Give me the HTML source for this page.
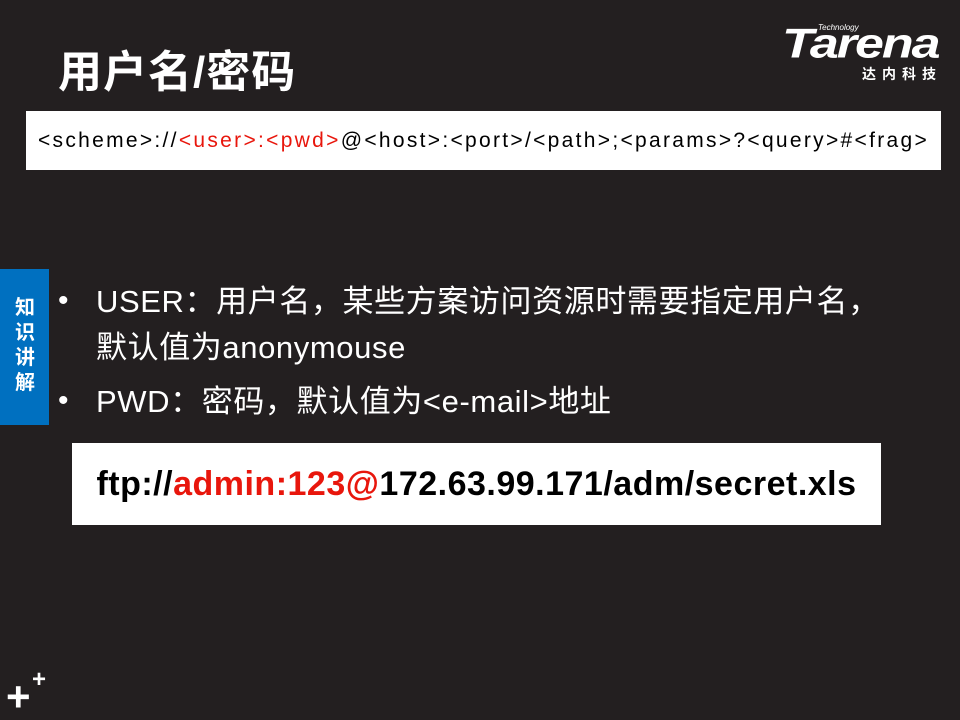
<!DOCTYPE html><html><head><meta charset="utf-8"><style>
body{margin:0;width:960px;height:720px;background:#231f20;position:relative;overflow:hidden;font-family:"Liberation Sans","Noto Sans CJK SC",sans-serif;color:#fff}
.a{position:absolute;white-space:nowrap}
.r{color:#e8160c}
</style></head><body>
<div class="a" style="left:58px;top:36px;font-size:44px;font-weight:bold;letter-spacing:1px">用户名/密码</div>
<div class="a" style="left:818px;top:23px;font-size:8px;font-style:italic">Technology</div>
<div class="a" style="left:782px;top:24px;font-size:52px;font-weight:bold;font-style:italic;letter-spacing:-2px;line-height:50px;transform:scaleY(0.8);transform-origin:top left">Tarena</div>
<div class="a" style="left:862px;top:64px;font-size:14px;font-weight:bold;letter-spacing:6px">达内科技</div>
<div class="a" style="left:26px;top:111px;width:915px;height:59px;background:#fff;color:#000;font-size:21px;line-height:59px;text-align:center;letter-spacing:2.3px">&lt;scheme&gt;://<span class="r">&lt;user&gt;:&lt;pwd&gt;</span>@&lt;host&gt;:&lt;port&gt;/&lt;path&gt;;&lt;params&gt;?&lt;query&gt;#&lt;frag&gt;</div>
<div class="a" style="left:0;top:269px;width:49px;height:156px;background:#0070c0"></div>
<div class="a" style="left:12px;top:296px;width:26px;font-size:20px;font-weight:bold;line-height:25px;text-align:center">知<br>识<br>讲<br>解</div>
<div class="a" style="left:58px;top:284px;font-size:30px">•</div>
<div class="a" style="left:96px;top:276px;font-size:31px;letter-spacing:0.6px">USER：用户名，某些方案访问资源时需要指定用户名，</div>
<div class="a" style="left:96px;top:322px;font-size:31px;letter-spacing:0.6px">默认值为anonymouse</div>
<div class="a" style="left:58px;top:384px;font-size:30px">•</div>
<div class="a" style="left:96px;top:376px;font-size:31px;letter-spacing:0.6px">PWD：密码，默认值为&lt;e-mail&gt;地址</div>
<div class="a" style="left:72px;top:443px;width:809px;height:82px;background:#fff;color:#000;font-size:34px;font-weight:bold;line-height:82px;text-align:center;letter-spacing:0.5px">ftp://<span class="r">admin:123@</span>172.63.99.171/adm/secret.xls</div>
<div class="a" style="left:6px;top:676px;font-size:42px;font-weight:bold;line-height:42px">+</div>
<div class="a" style="left:32px;top:668px;font-size:24px;font-weight:bold;line-height:24px">+</div>
</body></html>
